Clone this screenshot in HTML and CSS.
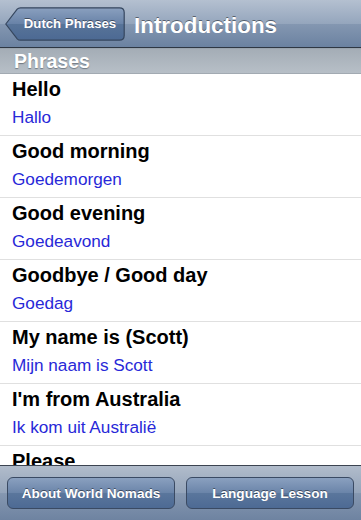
FILE: index.html
```html
<!DOCTYPE html>
<html>
<head>
<meta charset="utf-8">
<link rel="stylesheet" href="styles.css">
</head>
<body>
<div class="screen">
  <header class="navbar">
    <a class="back">
      <svg class="back-shape" width="120" height="34" viewBox="0 0 120 34">
        <defs>
          <linearGradient id="bg" x1="0" y1="0" x2="0" y2="1">
            <stop offset="0" stop-color="#8aa0bf"/>
            <stop offset="0.5" stop-color="#6882a7"/>
            <stop offset="0.51" stop-color="#587499"/>
            <stop offset="1" stop-color="#4c6993"/>
          </linearGradient>
        </defs>
        <path d="M0.8 17 L12.2 2.2 Q13.4 0.8 15.5 0.8 H114.5 Q119.2 0.8 119.2 5.5 V28.5 Q119.2 33.2 114.5 33.2 H15.5 Q13.4 33.2 12.2 31.8 Z" fill="url(#bg)" stroke="#36475f" stroke-width="1.2"/>
      </svg>
      <span class="back-label">Dutch Phrases</span>
    </a>
    <h1 class="title">Introductions</h1>
  </header>
  <div class="section-head">Phrases</div>
  <ul class="list">
    <li class="row"><div class="en">Hello</div><div class="nl">Hallo</div></li>
    <li class="row"><div class="en">Good morning</div><div class="nl">Goedemorgen</div></li>
    <li class="row"><div class="en">Good evening</div><div class="nl">Goedeavond</div></li>
    <li class="row"><div class="en">Goodbye / Good day</div><div class="nl">Goedag</div></li>
    <li class="row"><div class="en">My name is (Scott)</div><div class="nl">Mijn naam is Scott</div></li>
    <li class="row"><div class="en">I'm from Australia</div><div class="nl">Ik kom uit Australië</div></li>
    <li class="row"><div class="en">Please</div></li>
  </ul>
  <footer class="toolbar">
    <button class="tbtn">About World Nomads</button>
    <button class="tbtn">Language Lesson</button>
  </footer>
</div>
</body>
</html>
```
FILE: styles.css
```css
* { box-sizing: border-box; }
html, body { margin: 0; padding: 0; background: #fff; }
body { font-family: "Liberation Sans", Arial, Helvetica, sans-serif; }
.screen {
  width: 361px;
  height: 520px;
  display: flex;
  flex-direction: column;
  overflow: hidden;
}
.navbar {
  height: 48px;
  flex: 0 0 48px;
  display: flex;
  align-items: flex-start;
  padding: 7px 0 0 5px;
  background: linear-gradient(#b4c0d0 0%, #95a6bd 50%, #8497b1 51%, #6b82a1 100%);
  border-bottom: 1px solid #2e3743;
}
.back {
  position: relative;
  width: 120px;
  height: 34px;
  display: flex;
  align-items: center;
  justify-content: center;
  padding-left: 10px;
  padding-bottom: 1px;
}
.back-shape { position: absolute; left: 0; top: 0; }
.back-label {
  position: relative;
  color: #fff;
  font-weight: bold;
  font-size: 13.2px;
  text-shadow: 0 -1px 0 rgba(0,0,0,0.45);
}
.title {
  margin: 0 0 0 9px;
  padding-top: 3px;
  color: #fff;
  font-size: 22.4px;
  font-weight: bold;
  line-height: 32px;
  text-shadow: 0 -1px 0 rgba(0,0,0,0.45);
}
.section-head {
  height: 26px;
  flex: 0 0 26px;
  padding-left: 14px;
  background: linear-gradient(#a4adb6, #b7bfc7);
  border-top: 1px solid #9aa4ae;
  border-bottom: 1px solid #a2aab2;
  color: #fff;
  font-weight: bold;
  font-size: 19.5px;
  line-height: 25px;
  text-shadow: 0 1px 1px rgba(60,70,80,0.55);
}
.list {
  list-style: none;
  margin: 0;
  padding: 0;
  flex: 1 1 auto;
  overflow: hidden;
}
.row {
  height: 62px;
  padding: 4px 0 0 12px;
  border-bottom: 1px solid #e0e0e0;
}
.en {
  color: #000;
  font-weight: bold;
  font-size: 20px;
  line-height: 22px;
}
.nl {
  margin-top: 7px;
  color: #2828d8;
  font-size: 17.2px;
  line-height: 20px;
}
.toolbar {
  flex: 0 0 55px;
  height: 55px;
  display: flex;
  gap: 11px;
  padding: 11px 7px 0 7px;
  background: linear-gradient(#b1bccb 0%, #94a4ba 50%, #8597b0 51%, #6e83a1 100%);
  border-top: 1px solid #3b4350;
}
.tbtn {
  flex: 1 1 0;
  height: 32px;
  border: 1px solid #3a4a63;
  border-radius: 6px;
  background: linear-gradient(#8aa0bf 0%, #6a84a9 50%, #5a769c 51%, #4d6a94 100%);
  color: #fff;
  font-family: "Liberation Sans", Arial, sans-serif;
  font-weight: bold;
  font-size: 13.6px;
  text-shadow: 0 -1px 0 rgba(0,0,0,0.45);
  padding: 0;
}
```
